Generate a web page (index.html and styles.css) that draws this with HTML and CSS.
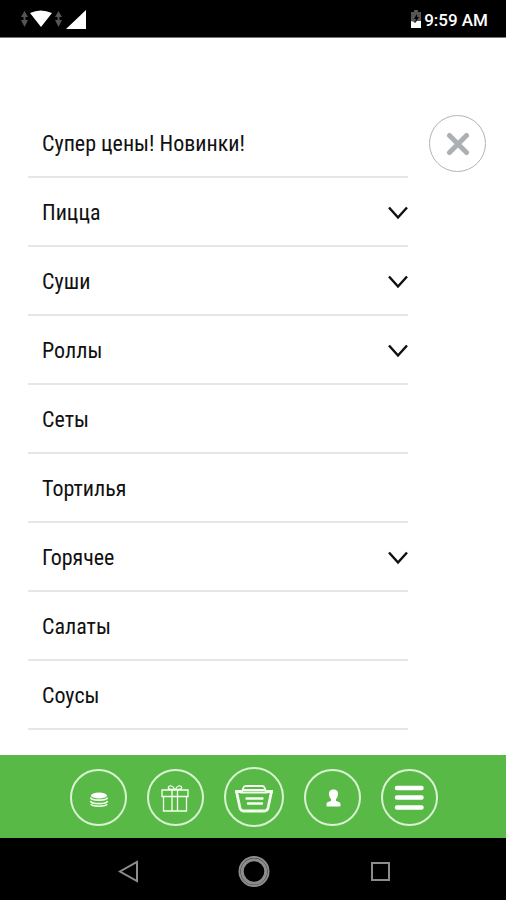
FILE: index.html
```html
<!DOCTYPE html>
<html lang="ru">
<head>
<meta charset="utf-8">
<meta name="viewport" content="width=device-width, initial-scale=1">
<title>Меню</title>
<link rel="stylesheet" href="styles.css">
</head>
<body>
<header class="status">
  <svg class="signals" width="68" height="24" viewBox="0 0 68 24" aria-hidden="true">
    <path class="dim" d="M4.500 3l3.500 6h-7zM1 12h7l-3.500 7zM3.500 8h2v5h-2zM38.500 3l3.500 6h-7zM35 12h7l-3.500 7zM37.500 8h2v5h-2z"/>
    <path class="lit" d="M10 5Q20.500 0 32 5L21 19zM46 21L66 2v19z"/>
  </svg>
  <div class="clock">
    <svg width="12" height="20" viewBox="0 0 12 20" aria-hidden="true">
      <path class="dim" d="M4 0h4v2h3v10H1V2h3z"/>
      <path d="M7 4l-3 5h2l-1 4 4-6H7z" fill="#000"/>
      <path class="lit" d="M1 11l3 1 1 1 2-2h4v7H1z"/>
    </svg>
    <span>9:59 AM</span>
  </div>
</header>
<main class="menu">
  <ul class="list">
    <li><a href="#">Супер цены! Новинки!</a></li>
    <li><a href="#">Пицца<svg class="chevron" viewBox="0 0 20 14" aria-hidden="true"><path d="M1 1.500L10 11.500 19 1.500"/></svg></a></li>
    <li><a href="#">Суши<svg class="chevron" viewBox="0 0 20 14" aria-hidden="true"><path d="M1 1.500L10 11.500 19 1.500"/></svg></a></li>
    <li><a href="#">Роллы<svg class="chevron" viewBox="0 0 20 14" aria-hidden="true"><path d="M1 1.500L10 11.500 19 1.500"/></svg></a></li>
    <li><a href="#">Сеты</a></li>
    <li><a href="#">Тортилья</a></li>
    <li><a href="#">Горячее<svg class="chevron" viewBox="0 0 20 14" aria-hidden="true"><path d="M1 1.500L10 11.500 19 1.500"/></svg></a></li>
    <li><a href="#">Салаты</a></li>
    <li><a href="#">Соусы</a></li>
  </ul>
  <button class="close" type="button" aria-label="Закрыть">
    <svg width="24" height="24" viewBox="0 0 24 24" aria-hidden="true"><path d="M3.500 3.500l17 17M20.500 3.500l-17 17"/></svg>
  </button>
</main>
<nav class="tabs">
  <button type="button" aria-label="Баллы">
    <svg width="40" height="40" viewBox="0 0 40 40" aria-hidden="true">
      <ellipse class="solid" cx="21" cy="18.500" rx="8" ry="3"/>
      <path class="coin" d="M12.500 20.500c1 3.500 16 3.500 17 0M12.500 24c1 3.500 16 3.500 17 0M13 27c1 3 15 3 16 0"/>
    </svg>
  </button>
  <button type="button" aria-label="Подарки">
    <svg width="40" height="40" viewBox="0 0 40 40" aria-hidden="true">
      <path class="thin" d="M7 13h26v6.500H7zM8.500 19.500v14.500h23V19.500M17 13v21M22.500 13v21M19 12.500c-4 0-6.500-.5-5.500-2.500s5-1.500 6 2.500M20.500 12.500c4 0 7-.5 6-2.500s-5-1.500-6 2.500"/>
    </svg>
  </button>
  <button class="basket" type="button" aria-label="Корзина">
    <svg width="44" height="40" viewBox="0 0 44 40" aria-hidden="true">
      <path class="bold" d="M3 14.500h6.500M34.500 14.500h6.500M4.500 14.500l3.500 16.500q.8 3 3.500 3h21q2.700 0 3.500-3l3.500-16.500"/>
      <path class="handle" d="M9.500 15.500l2-5q.6-1.500 2.500-1.500h16q1.900 0 2.500 1.500l2 5zM10 13h24"/>
      <path class="mid" d="M14.500 21.500h16M16 26.500h14"/>
    </svg>
  </button>
  <button type="button" aria-label="Профиль">
    <svg width="40" height="40" viewBox="0 0 40 40" aria-hidden="true">
      <path class="solid" d="M21.500 12.500c3 0 5 2 4.500 5-.2 2-1 3.500-2 4.500v2l3 1q1.500.5 1.500 2V28.500q0 1-1 1h-12q-1 0-1-1v-1.500q0-1.500 1.500-2l3-1v-2c-1-1-1.800-2.500-2-4.500-.5-3 1.500-5 4.500-5z"/>
    </svg>
  </button>
  <button type="button" aria-label="Меню" aria-current="page">
    <svg width="40" height="40" viewBox="0 0 40 40" aria-hidden="true">
      <path class="bars" d="M8 11h24.500M8 20.500h24.500M8 30.500h24.500"/>
    </svg>
  </button>
</nav>
<footer class="system">
  <button type="button" aria-label="Назад"><svg width="36" height="36" viewBox="0 0 36 36" aria-hidden="true"><path d="M27 9v19L10 18.500z"/></svg></button>
  <button type="button" aria-label="Домой"><svg width="36" height="36" viewBox="0 0 36 36" aria-hidden="true"><circle cx="18" cy="18.500" r="14.500"/><circle class="inner" cx="18" cy="18.500" r="11.800"/></svg></button>
  <button type="button" aria-label="Недавние"><svg width="36" height="36" viewBox="0 0 36 36" aria-hidden="true"><path d="M10 10h17v17H10z"/></svg></button>
</footer>
</body>
</html>
```
FILE: styles.css
```css
* {
  box-sizing: border-box;
}

body {
  display: flex;
  flex-direction: column;
  min-height: 100vh;
  margin: 0;
  background: #fff;
  color: #111;
  font-family: "Roboto Condensed", Roboto, "Liberation Sans", sans-serif;
}

button {
  display: grid;
  place-items: center;
  padding: 0;
  border: 0;
  background: none;
}

svg {
  display: block;
  flex: none;
}

.status {
  display: flex;
  justify-content: space-between;
  align-items: center;
  height: 38px;
  padding: 3px 18px 0 20px;
  border-bottom: 1px solid #777;
  background: #000;
}

.dim {
  fill: #555;
}

.lit {
  fill: #fff;
}

.clock {
  display: flex;
  align-items: center;
  gap: 2px;
  color: #fff;
  font: 500 17px/20px Roboto, sans-serif;
}

.menu {
  display: flex;
  flex: 1;
  align-items: flex-start;
  gap: 21px;
  padding: 71px 20px 0 28px;
}

.list {
  flex: 1;
  margin: 0;
  padding: 0;
  list-style: none;
}

.list a {
  display: flex;
  justify-content: space-between;
  align-items: center;
  height: 69px;
  padding: 2px 0 0 14px;
  border-bottom: 2px solid #e6e6e6;
  color: inherit;
  font-size: 22px;
  line-height: 28px;
  text-decoration: none;
}

.chevron {
  width: 20px;
  height: 14px;
  fill: none;
  stroke: #111;
  stroke-width: 2.5;
}

.close {
  width: 57px;
  height: 57px;
  margin-top: 6px;
  border: 1px solid #b0b5b7;
  border-radius: 50%;
}

.close svg {
  fill: none;
  stroke: #abb1b3;
  stroke-width: 5;
  stroke-linecap: round;
}

.tabs {
  display: flex;
  justify-content: center;
  align-items: center;
  gap: 20px;
  height: 83px;
  padding: 1px 0 0 1px;
  background: #58b947;
}

.tabs button {
  width: 57px;
  height: 57px;
  border: 2px solid #d9f3d2;
  border-radius: 50%;
}

.tabs .basket {
  width: 60px;
  height: 60px;
}

.tabs svg {
  fill: none;
  stroke: #f4fff0;
}

.tabs .solid {
  fill: #fff;
  stroke: none;
}

.thin {
  stroke-width: 1.3;
}

.coin {
  stroke-width: 1.6;
}

.handle {
  stroke-width: 1.8;
}

.mid {
  stroke-width: 2.4;
  stroke-linecap: round;
}

.bold {
  stroke-width: 2.8;
  stroke-linejoin: round;
}

.bars {
  stroke: #fff;
  stroke-width: 4.5;
  stroke-linecap: round;
}

.system {
  display: grid;
  grid-template-columns: repeat(3, 25%);
  justify-content: center;
  align-items: center;
  height: 62px;
  padding: 4px 0 0 2px;
  background: #000;
}

.system svg {
  fill: none;
  stroke: #8c8c8c;
  stroke-width: 2;
}

.system .inner {
  stroke-width: 3;
}
```
